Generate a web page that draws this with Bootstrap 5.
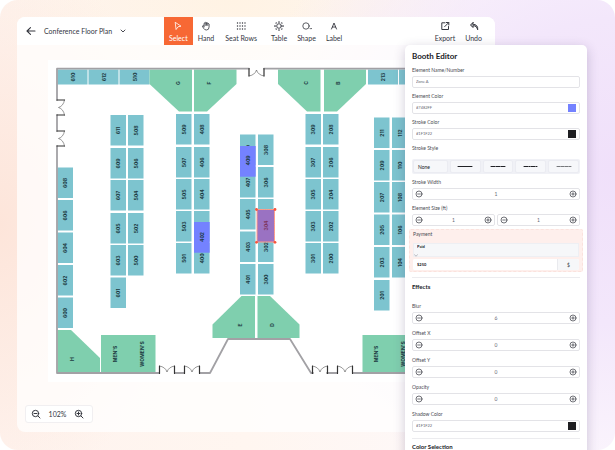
<!DOCTYPE html>
<html lang="en">
<head>
<meta charset="utf-8">
<meta name="viewport" content="width=device-width, initial-scale=1">
<title>Conference Floor Plan</title>
<link href="https://cdn.jsdelivr.net/npm/bootstrap@5.3.0/dist/css/bootstrap.min.css" rel="stylesheet">
<style>
body{font-family:Lato,"Open Sans",sans-serif;font-size:7px;line-height:8px;color:#35373f;background:#fff}
button{font:inherit;color:inherit}
.stage{display:grid;grid-template-columns:minmax(0,1fr) 90px 92px;grid-template-rows:minmax(0,1fr);height:100vh;padding:17px 28px 18px 17px;overflow:hidden;border-radius:18px;
background:radial-gradient(ellipse 60% 75% at 100% 38%,#f0e0fa 0,#f3e7fb 45%,transparent 100%),radial-gradient(ellipse 30% 60% at 0 50%,#fde5da 0,transparent 100%),radial-gradient(ellipse 40% 30% at 38% 0,#fff3e4 0,transparent 100%),linear-gradient(90deg,#fef3ee,#fff6f0 40%,#fdf9fd 90%)}
.editor-app{grid-column:1/3;grid-row:1;background:rgba(255,255,255,.74);border-radius:8px}
.app-bar{height:28px;background:#fff;border-radius:8px 8px 0 0}
.doc-title{width:147px;padding-left:9px}
.doc-title button,.tool,.step-btn,.zoom-box button{border:0;background:none;padding:0}
.tool{display:flex;flex-direction:column;align-items:center;gap:3px;height:28px;padding:4px 5px 0!important}
.tool svg{width:10px;height:10px}
.tool.active{background:#f76834;color:#fff}
.tool.seats{margin:0 4px 0 1px}
svg{fill:none;stroke:currentColor;stroke-linecap:round;stroke-linejoin:round;flex:none}
.plan{margin:15px 0 0 31px;background:#fff}
.plan svg{display:block;width:100%;height:auto;stroke:none}
.zoom-box{gap:8px;width:68px;height:18px;margin:0 0 9px 8px;background:#fff;border:1px solid #f1eff1;border-radius:3px;padding-right:3px}
.panel{grid-column:2/4;grid-row:1;z-index:1;margin-top:28px;padding:6px 7px 0;height:430px;background:#fff;border-radius:5px 5px 0 0;box-shadow:0 3px 12px rgba(60,40,90,.24);font-size:5px;line-height:6px}
.panel h1{font-size:8px;line-height:10px;font-weight:700;color:#202126;margin:0 0 6px}
.panel h2{font-size:6px;line-height:8px;font-weight:700;color:#202126;margin:0}
.panel h2.effects{margin-bottom:12px}
.panel label,.cap{display:block;font-size:5px;line-height:6px;margin:0 0 3px;color:#4b4c53}
.ctl{display:flex;align-items:center;height:12px;border:1px solid #e3e3e7;border-radius:2px;margin-bottom:5px;padding:0 3px;background:#fff}
.ctl input[type=text]{flex:1;width:0;min-width:0;border:0;padding:0;background:none;font-size:4px;line-height:6px;color:#666871;outline:0}
.ctl input[type=color]{width:8px;height:8px;padding:0;border:0;background:none;appearance:none}
input[type=color]::-webkit-color-swatch-wrapper{padding:0}
input[type=color]::-webkit-color-swatch{border:0;border-radius:0}
.ctl.stepper{padding:0 2px}
.ctl.stepper input[type=text]{text-align:center;font-size:5px}
.sizes{gap:2px}
.sizes .ctl{flex:1 1 0;min-width:0}
.step-btn{display:flex}
.step-btn svg{width:8px;height:8px}
.wide .ctl{margin-bottom:6px}
.strokes{height:15px;padding:1px;gap:2px;background:#f0f1f6;border-radius:2px;margin:8px 0 5px}
.panel .strokes label{flex:1;display:flex;align-items:center;justify-content:center;height:13px;margin:0;background:#f6f7fa;border:1px solid #ebecf2;border-radius:2px;color:#202126}
.panel .strokes label:first-child{justify-content:flex-start;padding-left:4px}
.pay{margin:-2px -3px 5px;padding:1px 3px 1px;background:#feefec;border:1px dashed #fbe2dd;border-radius:2px}
.panel .pay label{margin-bottom:6px}
.pay .pick{display:grid;margin-bottom:2px}
.pay .pick>*{grid-area:1/1}
.pay .pick svg{align-self:end;margin-left:1px;color:#8d8f98}
.pay select{display:block;width:100%;height:14px;border:1px solid #eeeff3;background:#f6f7f9;appearance:none;font-size:4px;line-height:5px;font-weight:700;padding:0 3px 8px;color:#202126}
.pay .price{height:11px;background:#fff;border-radius:2px;overflow:hidden}
.pay .price input{flex:1;min-width:0;border:0;font-size:4px;font-weight:700;padding:0 4px;color:#202126}
.pay .price span{width:22px;background:#f6f7f9;border-left:1px solid #e9eaee}
.rule{height:1px;background:#ececef;margin:0 0 5px}
.wide+.rule{margin-bottom:4px}
</style>
</head>
<body>
<main class="stage">
<section class="editor-app d-flex flex-column">
<header class="app-bar d-flex">
<div class="doc-title d-flex align-items-center">
<button type="button" aria-label="Back" class="d-flex me-2"><svg width="10" height="10" viewBox="0 0 10 10" stroke-width="1.1"><path d="M9 5H1M4.5 1.7 1 5l3.500 3.300"/></svg></button>
<span>Conference Floor Plan</span>
<button type="button" aria-label="Plan menu" class="d-flex ms-2"><svg width="6" height="6" viewBox="0 0 6 6" stroke-width=".9"><path d="m1 2 2 2 2-2"/></svg></button>
</div>
<nav class="d-flex flex-fill" aria-label="Tools">
<button type="button" class="tool active"><svg viewBox="0 0 10 10" stroke-width=".8"><path d="m2.500 1.500 5.500 3.700-3 .6-1.700 2.400z"/></svg>Select</button>
<button type="button" class="tool"><svg viewBox="0 0 10 10" stroke-width=".8"><path d="M3 5V2.400q.6-.8 1.200 0V1.600q.7-.8 1.300 0v.5q.7-.8 1.300 0v.7q.8-.7 1.300.2v3Q8 9 5.400 9 3.500 9 2.600 7.300L1.300 5.200q.5-1 1.700-.2v1M4.200 2.500v2M5.500 2.300v2M6.800 2.800v1.700"/></svg>Hand</button>
<button type="button" class="tool seats"><svg viewBox="0 0 10 10" stroke-width="1.400"><path d="M1.500 2h.01M4 2h.01M6.500 2h.01M9 2h.01M1.500 5h.01M4 5h.01M6.500 5h.01M9 5h.01M1.500 8h.01M4 8h.01M6.500 8h.01M9 8h.01"/></svg>Seat Rows</button>
<button type="button" class="tool"><svg viewBox="0 0 10 10" stroke-width=".9"><circle cx="5" cy="5" r="2.300"/><path stroke-width="1.200" d="M4.500 1h1M4.500 9h1M1 4.500v1M9 4.500v1M2 2.200l.3-.3M8 2.200l-.3-.3M2 7.800l.3.3M8 7.800l-.3.3"/></svg>Table</button>
<button type="button" class="tool"><svg viewBox="0 0 10 10" stroke-width=".8"><circle cx="4" cy="5" r="3.200"/><path d="m8 7.300 .8.800.8-.8"/></svg>Shape</button>
<button type="button" class="tool"><svg viewBox="0 0 10 10" stroke-width=".9"><path d="M2.500 8 5 2l2.500 6M3.400 6h3.200"/></svg>Label</button>
<button type="button" class="tool ms-auto"><svg viewBox="0 0 10 10" stroke-width="1"><path d="M5 1.800H1.800v6.700h6.700V5.500M6.300 1.500h2.500V4M8.600 1.700 4.700 5.600"/></svg>Export</button>
<button type="button" class="tool me-2"><svg viewBox="0 0 10 10" stroke-width="1"><path d="M4 1.500 1.500 4 4 6.500V4.800q3.600-.3 4.700 4Q9.300 3.500 4 3.200z" fill="currentColor" fill-opacity=".35"/></svg>Undo</button>
</nav>
</header>
<div class="plan">
<svg id="plan" viewBox="48 60 447 322" role="img" aria-label="Floor plan" font-family="Inter, sans-serif" font-size="5" font-weight="700" text-anchor="middle"></svg>
</div>
<div class="zoom-box d-flex align-items-center justify-content-center mt-auto">
<button type="button" aria-label="Zoom out" class="d-flex"><svg width="10" height="10" viewBox="0 0 10 10"><circle cx="4.500" cy="4.500" r="3.200"/><path d="m7 7 2 2M3 4.500h3"/></svg></button>
<span>102%</span>
<button type="button" aria-label="Zoom in" class="d-flex"><svg width="10" height="10" viewBox="0 0 10 10"><circle cx="4.500" cy="4.500" r="3.200"/><path d="m7 7 2 2M3 4.500h3M4.500 3v3"/></svg></button>
</div>
</section>
<aside class="panel">
<h1>Booth Editor</h1>
<label for="name">Element Name/Number</label>
<div class="ctl"><input type="text" id="name" value="Zone A"></div>
<label for="ecol">Element Color</label>
<div class="ctl"><input type="text" id="ecol" value="#7482FF"><input type="color" value="#7482ff" aria-label="Pick element color"></div>
<label for="scol">Stroke Color</label>
<div class="ctl"><input type="text" id="scol" value="#1F1F22"><input type="color" value="#1f1f22" aria-label="Pick stroke color"></div>
<div class="cap" id="ss">Stroke Style</div>
<div class="strokes d-flex" role="radiogroup" aria-labelledby="ss">
<label><input class="visually-hidden" type="radio" name="stroke" checked>None</label>
<label><input class="visually-hidden" type="radio" name="stroke" aria-label="Solid"><svg width="16" height="5" viewBox="0 0 16 5"><path d="M1 2.500h14"/></svg></label>
<label><input class="visually-hidden" type="radio" name="stroke" aria-label="Dashed"><svg width="16" height="5" viewBox="0 0 16 5" stroke-linecap="butt"><path stroke-dasharray="4 1" d="M1 2.500h14"/></svg></label>
<label><input class="visually-hidden" type="radio" name="stroke" aria-label="Dotted"><svg width="16" height="5" viewBox="0 0 16 5" stroke-linecap="butt"><path stroke-dasharray="4 1 1 1" d="M1 2.500h14"/></svg></label>
<label><input class="visually-hidden" type="radio" name="stroke" aria-label="Thin dashed"><svg width="16" height="5" viewBox="0 0 16 5" stroke-width=".6" stroke-linecap="butt"><path stroke-dasharray="3 1" d="M1 2.500h14"/></svg></label>
</div>
<label for="sw">Stroke Width</label>
<div class="ctl stepper"><input type="text" id="sw" value="1"></div>
<label for="w">Element Size (ft)</label>
<div class="sizes d-flex"><div class="ctl stepper"><input type="text" id="w" value="1"></div><div class="ctl stepper"><input type="text" aria-label="Element height" value="1"></div></div>
<div class="pay">
<label for="pay">Payment</label>
<div class="pick"><select id="pay"><option>Paid</option></select><svg width="4" height="3" viewBox="0 0 4 3" stroke-width=".6"><path d="m.5.8 1.500 1.400L3.500.8"/></svg></div>
<div class="price d-flex"><input type="text" value="$250" aria-label="Price"><span class="d-flex align-items-center justify-content-center">$</span></div>
</div>
<div class="rule"></div>
<h2 class="effects">Effects</h2>
<div class="wide">
<label for="blur">Blur</label>
<div class="ctl stepper"><input type="text" id="blur" value="6"></div>
<label for="ox">Offset X</label>
<div class="ctl stepper"><input type="text" id="ox" value="0"></div>
<label for="oy">Offset Y</label>
<div class="ctl stepper"><input type="text" id="oy" value="0"></div>
<label for="op">Opacity</label>
<div class="ctl stepper"><input type="text" id="op" value="0"></div>
<label for="sh">Shadow Color</label>
<div class="ctl"><input type="text" id="sh" value="#1F1F22"><input type="color" value="#1f1f22" aria-label="Pick shadow color"></div>
</div>
<div class="rule"></div>
<h2>Color Selection</h2>
</aside>
</main>
<script>
const box = (x, y, w, h, c) => `<rect x="${x}" y="${y}" width="${w}" height="${h}" fill="${c}"/>`;
const txt = (x, y, s, c = '#1c3a42') => `<text transform="translate(${x} ${y}) rotate(-90)" y="2" fill="${c}">${s}</text>`;
const teal = '#7dc4cf', green = '#7fcfae';
let out = '';
// Booth columns: left edge, tops of the rows, labels
const D = [114, 147, 179, 211, 243], B = [115, 148, 180, 213, 245, 277.5], F = [134.5, 167, 199, 231.5, 264], J = [117.5, 150, 182, 214.5, 247, 280];
[
  [57.5, [167.5, 200, 232.5, 265, 297.5], '608 606 604 602 600'],
  [110.5, B, '611 609 607 605 603 601'],
  [128, B, '508 506 504 502 500'],
  [176, D, '509 507 505 503 501'],
  [194, D, '408 406 404 402 400'],
  [240, F, '409 407 405 403 401'],
  [258, F, '308 306 304 302 300'],
  [305.5, D, '309 307 305 303 301'],
  [323, D, '208 206 204 202 200'],
  [374, J, '211 209 207 205 203 201'],
  [392, J, '112 110 108 106 104']
].forEach(([x, tops, names]) => names.split(' ').forEach((n, i) => {
  out += box(x, tops[i], 15.5, 30.5, teal) + txt(x + 7.7, tops[i] + 15.5, n);
}));
[[57.5, '610'], [88.5, '612'], [119.5, '510'], [368, '213'], [399, '113']].forEach(([x, n]) => {
  out += box(x, 69.5, 30, 15, teal) + txt(x + 15, 77, n);
});
// Halls and restrooms
['149.500,69.500 192,69.500 192,111.500 179,111.500 149.500,84', '194,69.500 236.500,69.500 236.500,84 207,111.500 194,111.500',
 '278,69.500 320.500,69.500 320.500,111.500 307,111.500 278,84', '324,69.500 366,69.500 366,84 337,111.500 324,111.500',
 '57.500,330 71,330 100,358 100,372.500 57.500,372.500', '101,335 155.500,335 155.500,372.500 101,372.500',
 '212.500,324.500 241.500,296 255,296 255,338 212.500,338', '257.500,296 270,296 299.500,324.500 299.500,338 257.500,338',
 '362.500,335 417,335 417,372.500 362.500,372.500'].forEach(p => out += `<polygon points="${p}" fill="${green}"/>`);
[[177.5, 83, 'G'], [208.5, 83, 'F'], [305.5, 83, 'C'], [338, 83, 'B'], [72, 359, 'H'], [240, 325, 'E'], [272, 325, 'D'],
 [115, 354, "MEN'S"], [141.5, 354, "WOMEN'S"], [376, 354, "MEN'S"], [403, 354, "WOMEN'S"]].forEach(a => out += txt(...a));
// Walls
out += '<path fill="none" stroke="#a2a1a5" stroke-width="1.800" d="M249 68.700H57V100M264 68.700H495M57 115v16M57 146V373H159M175 373h9M200 373h10L228 339H290L311 373h2M327 373h10M353 373H495"/>';
// Doors
const door = (x, y, r) => `<g transform="translate(${x} ${y}) rotate(${r})" fill="none" stroke="#333"><path d="M0 .5V-7M15 .5V-7" stroke-width="1.200"/><path d="M0-7Q6-6 7.500-1Q9-6 15-7" stroke-width=".5"/></g>`;
out += door(159.500, 373, 0) + door(184.500, 373, 0) + door(312.500, 373, 0) + door(337.500, 373, 0) + door(264, 69, 180) + door(57.500, 100, 90) + door(57.500, 131, 90);
// Reserved booths and the selected one
out += box(240, 146, 15.7, 30.7, '#7482ff') + txt(247.7, 160.5, '409') + box(194, 222, 15.7, 30.7, '#7482ff') + txt(201.7, 237, '402');
out += box(257, 210, 17.5, 32, '#9a72c2') + txt(265.5, 225.5, '304', '#7d355e');
out += '<rect x="257" y="209.500" width="17.500" height="32.500" fill="none" stroke="#ff9c88" stroke-dasharray="1.500 .7"/>';
[[256.5, 209.5], [275, 209.5], [256.5, 242.300], [275, 242.300]].forEach(([x, y]) => out += `<circle cx="${x}" cy="${y}" r="1.400" fill="#f7543c"/>`);
document.getElementById('plan').innerHTML = out;
// Minus and plus buttons of each stepper
const stepBtn = (label, d) => `<button type="button" class="step-btn" aria-label="${label}"><svg viewBox="0 0 8 8" stroke-width=".7"><circle cx="4" cy="4" r="3"/><path d="${d}"/></svg></button>`;
document.querySelectorAll('.stepper').forEach(s => {
  const f = s.querySelector('input');
  s.insertAdjacentHTML('afterbegin', stepBtn('Decrease', 'M2.700 4h2.600'));
  s.insertAdjacentHTML('beforeend', stepBtn('Increase', 'M2.700 4h2.600M4 2.700v2.600'));
  const b = s.querySelectorAll('button');
  b[0].onclick = () => f.value = Math.max(0, +f.value - 1);
  b[1].onclick = () => f.value = +f.value + 1;
});
</script>
<script src="https://cdn.jsdelivr.net/npm/bootstrap@5.3.0/dist/js/bootstrap.bundle.min.js"></script>
</body>
</html>
